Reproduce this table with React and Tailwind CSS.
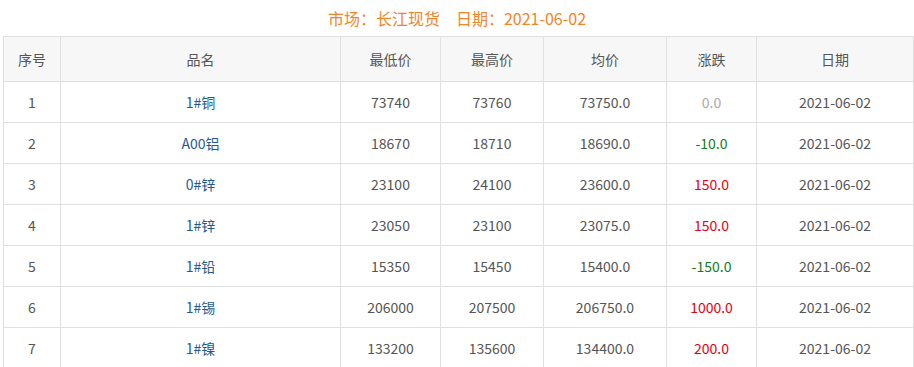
import React from "react";

const rows = [
  ["1", "1#铜", "73740", "73760", "73750.0", "0.0", "z"],
  ["2", "A00铝", "18670", "18710", "18690.0", "-10.0", "d"],
  ["3", "0#锌", "23100", "24100", "23600.0", "150.0", "u"],
  ["4", "1#锌", "23050", "23100", "23075.0", "150.0", "u"],
  ["5", "1#铅", "15350", "15450", "15400.0", "-150.0", "d"],
  ["6", "1#锡", "206000", "207500", "206750.0", "1000.0", "u"],
  ["7", "1#镍", "133200", "135600", "134400.0", "200.0", "u"],
];

const widths = ["w-[57px]", "w-[280px]", "w-[100px]", "w-[103px]", "w-[123px]", "w-[90px]", "w-[157px]"];
const heads = ["序号", "品名", "最低价", "最高价", "均价", "涨跌", "日期"];

export default function App() {
  return (
    <div
      className="w-[914px] h-[367px] overflow-hidden bg-white text-[14px] text-[#555]"
      style={{ fontFamily: '"Noto Sans CJK SC", "Noto Sans", sans-serif' }}
    >
      <div className="h-9 flex items-center justify-center text-[16px] text-[#f0862a]">
        <span>市场：长江现货</span>
        <span className="ml-4">日期：2021-06-02</span>
      </div>
      <table className="ml-[3px] w-[911px] table-fixed border-collapse">
        <colgroup>
          {widths.map((w, i) => (
            <col key={i} className={w} />
          ))}
        </colgroup>
        <thead>
          <tr className="h-[45px] bg-[#f7f7f7]">
            {heads.map((h) => (
              <th key={h} className="border border-[#e0e0e0] font-normal text-center text-[#555]">
                {h}
              </th>
            ))}
          </tr>
        </thead>
        <tbody>
          {rows.map((r) => (
            <tr key={r[0]} className="h-[41px]">
              <td className="border border-[#e0e0e0] text-center">{r[0]}</td>
              <td className="border border-[#e0e0e0] text-center text-[#1f5a90]">{r[1]}</td>
              <td className="border border-[#e0e0e0] text-center">{r[2]}</td>
              <td className="border border-[#e0e0e0] text-center">{r[3]}</td>
              <td className="border border-[#e0e0e0] text-center">{r[4]}</td>
              <td
                className={
                  "border border-[#e0e0e0] text-center " +
                  (r[6] === "u" ? "text-[#e60012]" : r[6] === "d" ? "text-[#0f7d1a]" : "text-[#aaaaaa]")
                }
              >
                {r[5]}
              </td>
              <td className="border border-[#e0e0e0] text-center">2021-06-02</td>
            </tr>
          ))}
        </tbody>
      </table>
    </div>
  );
}
